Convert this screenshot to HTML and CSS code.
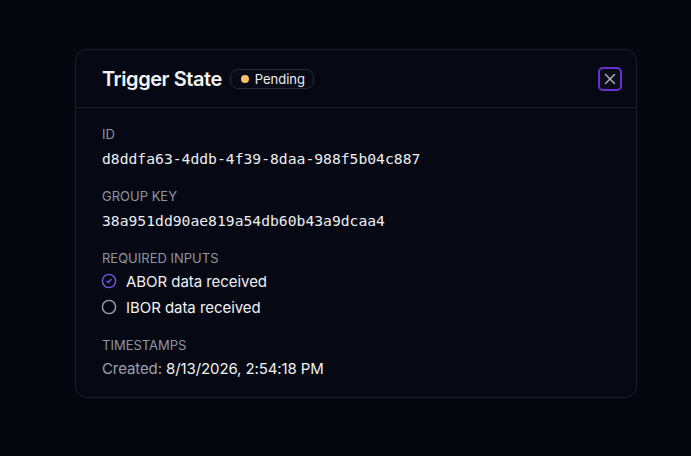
FILE: index.html
```html
<!DOCTYPE html>
<html lang="en">
<head>
<meta charset="utf-8">
<title>Trigger State</title>
<link rel="stylesheet" href="styles.css">
</head>
<body>
<div class="page">
  <section class="card">
    <header class="card-header">
      <h2 class="title">Trigger State</h2>
      <span class="badge"><span class="dot"></span>Pending</span>
      <button class="close" aria-label="Close">
        <svg width="12" height="12" viewBox="0 0 12 12" fill="none" stroke="currentColor" stroke-width="1.4" stroke-linecap="round"><path d="M1.5 1.5l9 9M10.5 1.5l-9 9"/></svg>
      </button>
    </header>
    <div class="card-body">
      <div class="group">
        <div class="label">ID</div>
        <div class="mono">d8ddfa63-4ddb-4f39-8daa-988f5b04c887</div>
      </div>
      <div class="group">
        <div class="label">Group Key</div>
        <div class="mono">38a951dd90ae819a54db60b43a9dcaa4</div>
      </div>
      <div class="group">
        <div class="label">Required Inputs</div>
        <ul class="inputs">
          <li class="input done">
            <svg width="16" height="16" viewBox="0 0 16 16" fill="none" stroke="currentColor" stroke-width="1.4" stroke-linecap="round" stroke-linejoin="round"><circle cx="8" cy="8" r="6.6"/><path d="M5.9 8.2l1.4 1.3 2.8-2.9"/></svg>
            <span>ABOR data received</span>
          </li>
          <li class="input">
            <svg width="16" height="16" viewBox="0 0 16 16" fill="none" stroke="currentColor" stroke-width="1.4"><circle cx="8" cy="8" r="6.6"/></svg>
            <span>IBOR data received</span>
          </li>
        </ul>
      </div>
      <div class="group">
        <div class="label">Timestamps</div>
        <div class="stamp"><span class="muted">Created:</span> 8/13/2026, 2:54:18 PM</div>
      </div>
    </div>
  </section>
</div>
</body>
</html>
```
FILE: styles.css
```css
* { box-sizing: border-box; }
html, body { margin: 0; padding: 0; }
body {
  background: #05070e;
  font-family: Inter, "Noto Sans", sans-serif;
  color: #e5e7eb;
  width: 691px;
  height: 456px;
  overflow: hidden;
}
.page {
  padding: 49px 0 0 75px;
}
.card {
  width: 562px;
  background: #060913;
  border: 1px solid #1c2130;
  border-radius: 12px;
}
.card-header {
  height: 58px;
  display: flex;
  align-items: center;
  padding: 0 14px 0 26px;
  border-bottom: 1px solid #1c2130;
}
.title {
  margin: 0;
  font-size: 20px;
  font-weight: 600;
  color: #f3f4f6;
  line-height: 28px;
  letter-spacing: -0.45px;
}
.badge {
  margin-left: 8px;
  height: 20px;
  display: inline-flex;
  align-items: center;
  gap: 6px;
  padding: 0 8px 0 10px;
  border: 1px solid #262b38;
  border-radius: 8px;
  background: #080b15;
  font-size: 13px;
  font-weight: 400;
  color: #eceef2;
}
.dot {
  width: 8px;
  height: 8px;
  border-radius: 50%;
  background: #f9c06b;
}
.close {
  margin-left: auto;
  width: 24px;
  height: 24px;
  padding: 0;
  display: flex;
  align-items: center;
  justify-content: center;
  border: 2px solid #6a2fd4;
  border-radius: 5px;
  background: #0b0e18;
  color: #b4b8c3;
  cursor: pointer;
}
.card-body {
  padding: 16px 26px 16px 26px;
  display: flex;
  flex-direction: column;
  gap: 16px;
}
.label {
  font-size: 13px;
  line-height: 20px;
  text-transform: uppercase;
  color: #8f95a2;
}
.mono {
  margin-top: 4px;
  font-family: "DejaVu Sans Mono", "Liberation Mono", monospace;
  font-size: 14.7px;
  line-height: 22px;
  color: #eceef2;
}
.inputs {
  list-style: none;
  margin: 1px 0 0;
  padding: 0;
  display: flex;
  flex-direction: column;
  gap: 2px;
}
.input {
  display: flex;
  align-items: center;
  gap: 9px;
  height: 24px;
  font-size: 15px;
  letter-spacing: -0.05px;
  color: #f0f1f4;
  margin-left: -1px;
}
.input svg { color: #9ea3ae; flex: none; }
.input.done svg { color: #7457e6; }
.stamp {
  margin-top: 2px;
  font-size: 15px;
  line-height: 24px;
  letter-spacing: -0.1px;
  font-weight: 400;
  color: #f0f1f4;
}
.muted {
  color: #9ca1ad;
}
```
